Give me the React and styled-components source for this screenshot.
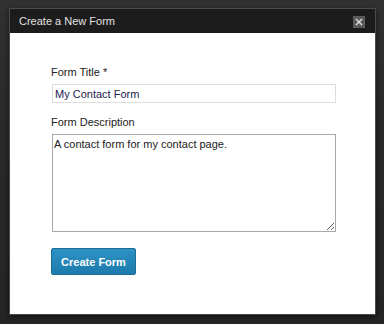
import React from 'react';
import styled, { createGlobalStyle } from 'styled-components';

const GlobalStyle = createGlobalStyle`
    html, body {
        margin: 0;
        padding: 0;
        background: #2a2a2a;
        font-family: "Liberation Sans", Arial, sans-serif;
    }
`

const Page = styled.div`
    width: 384px;
    height: 324px;
    padding: 8px 0 0 9px;
    box-sizing: border-box;
    background: linear-gradient(#323232, #2a2a2a 40%, #262626);
`

const Dialog = styled.div`
    width: 367px;
    border: 1px solid #4a4a4a;
    box-sizing: border-box;
    background: #fff;
    box-shadow: 0 2px 6px rgba(0,0,0,0.6);
`

const Header = styled.div`
    height: 24px;
    background: #1c1c1c;
    display: flex;
    align-items: center;
    justify-content: space-between;
    padding: 0 10px 0 9px;
    color: #e2e2e2;
    font-size: 11px;
`

const CloseButton = styled.button`
    width: 12px;
    height: 12px;
    padding: 0;
    border: none;
    background: #5a5a5a;
    display: flex;
    align-items: center;
    justify-content: center;
    margin-top: 1px;
`

const Body = styled.form`
    padding: 32px 40px 39px 41px;
    display: flex;
    flex-direction: column;
`

const Label = styled.label`
    font-size: 11px;
    color: #222;
    margin-bottom: 5px;
    line-height: 14px;
`

const TextInput = styled.input`
    width: 284px;
    height: 19px;
    box-sizing: border-box;
    margin: 0 0 12px 1px;
    border: 1px solid #dedede;
    padding: 0 2px;
    font-family: "Liberation Sans", Arial, sans-serif;
    font-size: 11px;
    color: #1b1b4d;
    outline: none;
`

const TextArea = styled.textarea`
    width: 284px;
    height: 98px;
    box-sizing: border-box;
    margin: 0 0 16px 1px;
    border: 1px solid #a8a8a8;
    padding: 3px 1px;
    font-family: "Liberation Sans", Arial, sans-serif;
    font-size: 11px;
    color: #222;
    resize: vertical;
    outline: none;
`

const SubmitButton = styled.button`
    align-self: flex-start;
    width: 85px;
    height: 27px;
    border: 1px solid #1b6d96;
    border-radius: 2px;
    background: linear-gradient(#2c93c4, #1d7aac);
    color: #fff;
    font-family: "Liberation Sans", Arial, sans-serif;
    font-weight: bold;
    font-size: 11px;
    padding: 0;
`

function App() {
    return (
        <Page>
            <GlobalStyle />
            <Dialog>
                <Header>
                    <span>Create a New Form</span>
                    <CloseButton type="button" aria-label="close">
                        <svg width="8" height="8" viewBox="0 0 8 8">
                            <path d="M1 1L7 7M7 1L1 7" stroke="#e0e0e0" strokeWidth="1.4" />
                        </svg>
                    </CloseButton>
                </Header>
                <Body onSubmit={e => e.preventDefault()}>
                    <Label>Form Title *</Label>
                    <TextInput defaultValue="My Contact Form" />
                    <Label>Form Description</Label>
                    <TextArea defaultValue="A contact form for my contact page." />
                    <SubmitButton type="submit">Create Form</SubmitButton>
                </Body>
            </Dialog>
        </Page>
    );
}

export default App;
